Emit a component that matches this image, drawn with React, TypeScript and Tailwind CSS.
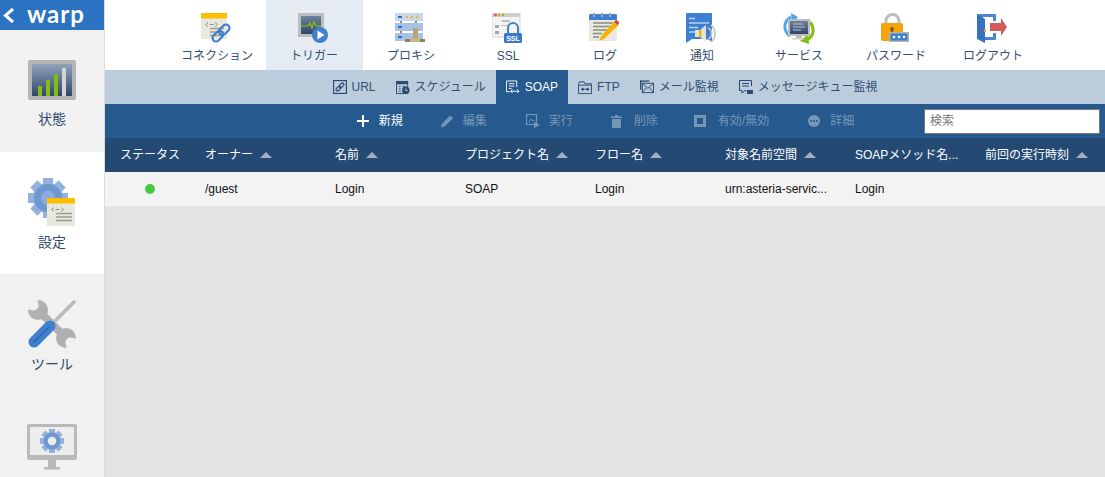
import React from "react";

const font = "font-['Liberation_Sans','Noto_Sans_CJK_JP',sans-serif]";

// big pictograms, drawn in a 48x48 box
const Gear = ({ cx, cy, r, outer, inner, hole }: { cx: number; cy: number; r: number; outer: string; inner: string; hole: string }) => (
  <g>
    {[0, 45, 90, 135].map((a) => (
      <rect key={a} x={cx - r * 0.25} y={cy - r} width={r * 0.5} height={r * 2} fill={outer} transform={`rotate(${a} ${cx} ${cy})`} />
    ))}
    <circle cx={cx} cy={cy} r={r * 0.76} fill={outer} />
    <circle cx={cx} cy={cy} r={r * 0.7} fill={inner} />
    <circle cx={cx} cy={cy} r={r * 0.36} fill={hole} />
  </g>
);

const DocCode = ({ x, y, w, h }: { x: number; y: number; w: number; h: number }) => (
  <g>
    <rect x={x} y={y} width={w} height={h} fill="#e8e8df" />
    <rect x={x} y={y} width={w} height={5.5} fill="#fdbd00" />
    <path d={`M${x + 7} ${y + 9.5}l-2.5 2 2.5 2M${x + 14} ${y + 9.5}l2.5 2-2.5 2M${x + 8.5} ${y + 11.5}h4`} stroke="#8f8f88" strokeWidth="1" fill="none" />
    <path d={`M${x + 9} ${y + 15.5}h${w - 12}M${x + 9} ${y + 19}h${w - 12}M${x + 9} ${y + 22.5}h${w - 12}`} stroke="#9c9c94" strokeWidth="1.5" />
  </g>
);

const StatusIcon = () => (
  <svg width="48" height="40" viewBox="0 0 48 40">
    <defs>
      <linearGradient id="st" x1="0" y1="0" x2="0" y2="1">
        <stop offset="0" stopColor="#8fa3bd" />
        <stop offset="1" stopColor="#2f4669" />
      </linearGradient>
    </defs>
    <rect width="48" height="40" rx="2" fill="#b4b4b4" />
    <rect x="4" y="4" width="40" height="32" fill="url(#st)" />
    <rect x="10" y="26" width="4" height="10" fill="#84bd10" />
    <rect x="18" y="20" width="4" height="16" fill="#84bd10" />
    <rect x="26" y="14" width="4" height="22" fill="#84bd10" />
    <rect x="34" y="8" width="4" height="28" fill="#d4d4d4" />
  </svg>
);

const SettingsIcon = () => (
  <svg width="48" height="48" viewBox="0 0 48 48">
    <Gear cx={20} cy={20} r={20} outer="#93b1de" inner="#6f97cf" hole="#8caadb" />
    <DocCode x={19} y={20} w={28} h={28} />
  </svg>
);

const ToolIcon = () => (
  <svg width="48" height="48" viewBox="0 0 48 48">
    <path d="M10 10L38 38" stroke="#b0b0b0" strokeWidth="8" />
    <circle cx="10" cy="10" r="10" fill="#b0b0b0" />
    <circle cx="38" cy="38" r="10" fill="#b0b0b0" />
    <path d="M-1 -1L9 -1L10.500 5a5 5 0 0 1-5.500 5.500L-1 9z" fill="#f1f1f1" />
    <path d="M49 49L39 49L37.500 43a5 5 0 0 1 5.500-5.500L49 39z" fill="#f1f1f1" />
    <path d="M46 2L27 21" stroke="#b9b9b9" strokeWidth="3.500" strokeLinecap="round" />
    <path d="M6 42L22 26" stroke="#3f7fcf" strokeWidth="11" strokeLinecap="round" />
    <path d="M5 43L21 27" stroke="#2b62ad" strokeWidth="1.500" />
  </svg>
);

const MonitorIcon = () => (
  <svg width="50" height="46" viewBox="0 0 50 46">
    <rect width="50" height="36" rx="2" fill="#b9b9b9" />
    <rect x="3" y="3" width="44" height="28" rx="1" fill="#ededed" />
    <rect x="21" y="36" width="8" height="7" fill="#b9b9b9" />
    <rect x="17" y="43" width="16" height="2.500" fill="#b9b9b9" />
    <Gear cx={25} cy={17} r={12} outer="#93b1de" inner="#6f97cf" hole="#ededed" />
  </svg>
);

const ConnectionIcon = () => (
  <svg width="32" height="32" viewBox="0 0 32 32">
    <DocCode x={0} y={0} w={26} h={26} />
    <g fill="none" transform="rotate(-45 20 20)">
      <rect x="9.500" y="16.500" width="12" height="7" rx="3.500" stroke="#3f7fcf" strokeWidth="2.200" />
      <rect x="18.500" y="16.500" width="12" height="7" rx="3.500" stroke="#3f7fcf" strokeWidth="2.200" />
    </g>
  </svg>
);

const TriggerIcon = () => (
  <svg width="32" height="32" viewBox="0 0 32 32">
    <defs>
      <linearGradient id="tr" x1="0" y1="0" x2="0" y2="1">
        <stop offset="0" stopColor="#6f829b" />
        <stop offset="1" stopColor="#2f4669" />
      </linearGradient>
    </defs>
    <rect width="26" height="24" fill="#bdbdbd" />
    <rect x="3" y="3" width="20" height="18" fill="url(#tr)" />
    <path d="M3 13h7l2-3 2 5 2-6 2 4h5" stroke="#8cc20f" strokeWidth="1.200" fill="none" />
    <circle cx="22" cy="22" r="8" fill="#3f7fcf" />
    <path d="M19.500 17.500v9l7-4.500z" fill="#fff" />
  </svg>
);

const ProxyIcon = () => (
  <svg width="32" height="32" viewBox="0 0 32 32">
    {[0, 10, 20].map((y) => (
      <g key={y}>
        <rect x="0" y={y} width="28" height="8" fill={y === 0 ? "#c8d6ea" : "#a9c1e4"} />
        <rect x="3" y={y + 3} width="4" height="2" fill="#2f6fbe" />
      </g>
    ))}
    <rect x="11" y="3" width="2" height="2" fill="#f2b233" />
    <rect x="16" y="3" width="2" height="2" fill="#f2b233" />
    <rect x="21" y="3" width="2" height="2" fill="#f2b233" />
    <rect x="5" y="8" width="2" height="2" fill="#8a8a8a" />
    <rect x="5" y="18" width="2" height="2" fill="#8a8a8a" />
    <rect x="20" y="8" width="2" height="2" fill="#8a8a8a" />
    <rect x="18" y="15" width="5" height="13" fill="#b5a57a" />
    <rect x="10" y="26" width="20" height="3" fill="#8f8159" />
    <rect x="15" y="25" width="10" height="4" fill="#c4b78f" />
  </svg>
);

const SslIcon = () => (
  <svg width="32" height="32" viewBox="0 0 32 32">
    <rect width="28" height="24" fill="#f4f4f4" stroke="#d4d4d4" />
    <rect width="28" height="4" fill="#cfcfcf" />
    <circle cx="3.500" cy="2" r="1.300" fill="#d94a3f" />
    <circle cx="7" cy="2" r="1.300" fill="#eea52b" />
    <circle cx="11" cy="2" r="1.300" fill="#8cc20f" />
    <rect x="10" y="7" width="8" height="2" fill="#bdbdbd" />
    <rect x="3" y="12" width="4" height="3" fill="#a8a8a8" />
    <rect x="3" y="18" width="4" height="3" fill="#a8a8a8" />
    <rect x="9" y="12" width="7" height="1" fill="#c4c4c4" />
    <path d="M16 20v-5a5 5 0 0 1 10 0v5" stroke="#3f7fcf" strokeWidth="2" fill="none" />
    <rect x="12" y="20" width="18" height="10" rx="1.500" fill="#3a78c8" />
    <text x="21" y="28" textAnchor="middle" fontSize="7" fontWeight="700" fill="#fff" fontFamily="Liberation Sans">SSL</text>
  </svg>
);

const LogIcon = () => (
  <svg width="32" height="32" viewBox="0 0 32 32">
    <rect y="1" width="28" height="27" rx="1.500" fill="#e8e8df" />
    <rect y="1" width="28" height="6" rx="1.500" fill="#3f7fcf" />
    <path d="M5 0v4M13 0v4M21 0v4" stroke="#9fa8b0" strokeWidth="2" />
    <path d="M4 10h20M4 13.500h20M4 17h14M4 20.500h9M4 24h6" stroke="#8b8b84" strokeWidth="1.500" />
    <path d="M10 28l2-5L25 9l4 3.500L15 26z" fill="#f8b500" />
    <path d="M25 9l2-2c1.500 0 3 1.500 3 3l-1 2.500z" fill="#d9443f" />
  </svg>
);

const NoticeIcon = () => (
  <svg width="32" height="32" viewBox="0 0 32 32">
    <path d="M1 0h24a1 1 0 0 1 1 1v28l-3-2-4-1H6l-6 4V1a1 1 0 0 1 1-1z" fill="#3f7fcf" />
    <path d="M3 5.500h6M3 10h20M3 14.500h9M3 19h7" stroke="#b9d1ef" strokeWidth="1.300" />
    <path d="M9 17h5l6-5v17l-6-5H9z" fill="#e3e3da" />
    <rect x="13" y="17" width="2.500" height="7" fill="#f8b500" />
    <path d="M22 15a6 6 0 0 1 0 11M25 12a11 11 0 0 1 0 17" stroke="#c6c6c6" strokeWidth="1.700" fill="none" />
  </svg>
);

const ServiceIcon = () => (
  <svg width="32" height="32" viewBox="0 0 32 32">
    <defs>
      <linearGradient id="sv" x1="0" y1="0" x2="0" y2="1">
        <stop offset="0" stopColor="#6f829b" />
        <stop offset="1" stopColor="#2f4669" />
      </linearGradient>
    </defs>
    <path d="M7 23C0 18 0 8 8 4" stroke="#4fa6ea" strokeWidth="3" fill="none" />
    <path d="M8 0l7 4-6 6z" fill="#4fa6ea" />
    <path d="M27 9c5 6 4 14-3 18" stroke="#84bd10" strokeWidth="3" fill="none" />
    <path d="M25 21l1 10-9-3z" fill="#84bd10" />
    <rect x="5" y="6" width="22" height="17" fill="#bdbdbd" />
    <rect x="7" y="8" width="18" height="13" fill="url(#sv)" />
    <path d="M10 11h10M10 14h12M10 17h8" stroke="#b9c6d8" strokeWidth="1" />
    <rect x="13" y="23" width="6" height="2" fill="#bdbdbd" />
    <rect x="9" y="25" width="12" height="1.500" fill="#cfcfcf" />
  </svg>
);

const PasswordIcon = () => (
  <svg width="32" height="32" viewBox="0 0 32 32">
    <path d="M6 11V8a6.500 6.500 0 0 1 13 0v3" stroke="#bdbdbd" strokeWidth="3" fill="none" />
    <rect x="1" y="10" width="22" height="18" rx="2" fill="#f5a30a" />
    <circle cx="12" cy="16" r="2" fill="#8a5a0a" />
    <rect x="11" y="17" width="2" height="4" fill="#8a5a0a" />
    <rect x="9" y="19" width="20" height="10" fill="#b4b4b4" />
    <rect x="10.500" y="20.500" width="17" height="7" fill="#3f7fcf" />
    <circle cx="14" cy="24" r="1.300" fill="#fff" />
    <circle cx="19" cy="24" r="1.300" fill="#fff" />
    <circle cx="24" cy="24" r="1.300" fill="#fff" />
  </svg>
);

const LogoutIcon = () => (
  <svg width="32" height="32" viewBox="0 0 32 32">
    <path d="M0 1h18a1 1 0 0 1 1 1v6h-3V4H6v20h10v-4h3v6a1 1 0 0 1-1 1h-10z" fill="#4a87d4" />
    <path d="M0 1l8 5v24l-8-4z" fill="#3672c0" />
    <rect x="7" y="16" width="2" height="3" fill="#f2a51d" />
    <path d="M13 10h11V5l6 9-6 9v-5H13z" fill="#cf5b5b" />
  </svg>
);

// small outline icons for the sub tabs
const UrlTab = ({ c }: { c: string }) => (
  <svg width="14" height="14" viewBox="0 0 14 14" fill="none" stroke={c}>
    <rect x="0.500" y="0.500" width="13" height="13" strokeWidth="1.300" />
    <g transform="rotate(-45 7 7)" strokeWidth="1.200">
      <rect x="2" y="5.500" width="5.500" height="3" rx="1.500" />
      <rect x="6.500" y="5.500" width="5.500" height="3" rx="1.500" />
    </g>
  </svg>
);

const ScheduleTab = ({ c }: { c: string }) => (
  <svg width="14" height="15" viewBox="0 0 15 15" fill="none">
    <rect x="0.500" y="1" width="12" height="13" stroke={c} />
    <rect x="0.500" y="1" width="12" height="3" fill={c} />
    <path d="M3 6.500h2M3 9h2M3 11.500h2M7 6.500h3" stroke={c} />
    <circle cx="10.500" cy="10.500" r="4" fill={c} />
    <path d="M10.500 8.500v2.300h2" stroke="#bbcddd" />
  </svg>
);

const SoapTab = ({ c }: { c: string }) => (
  <svg width="14" height="15" viewBox="0 0 15 15" fill="none" stroke={c}>
    <path d="M4 12H0.500V0.500h11V7" />
    <path d="M3 3.500h6M3 6h6M3 8.500h3" />
    <path d="M5 11.500h9M7 9.500l-2 2 2 2M12 9.500l2 2-2 2" />
  </svg>
);

const FtpTab = ({ c }: { c: string }) => (
  <svg width="14" height="15" viewBox="0 0 15 15" fill="none">
    <path d="M0.500 3.500V14h14V3.500h-7l-1-2H1.500z" stroke={c} />
    <path d="M0.500 5h14" stroke={c} />
    <path d="M3 9.500l2.500-2v1.200H7v1.600H5.500v1.200zM12.500 9.500l-2.500-2v1.200H8v1.600h2v1.200z" fill={c} />
  </svg>
);

const MailTab = ({ c }: { c: string }) => (
  <svg width="14" height="14" viewBox="0 0 15 14" fill="none" stroke={c}>
    <path d="M0.700 0v10" strokeWidth="1.400" />
    <path d="M0 0.700h10" strokeWidth="1.400" />
    <rect x="2.500" y="3" width="12" height="10" />
    <path d="M2.500 3l6 5.500 6-5.500M2.500 13l4.500-5.500M14.500 13L10 7.500" />
  </svg>
);

const QueueTab = ({ c }: { c: string }) => (
  <svg width="14" height="15" viewBox="0 0 14 15" fill="none">
    <path d="M12.500 6V0.500H0.500V10.500h2.500v2.500l3-2.500h1.500" stroke={c} />
    <path d="M3 3.500h7M3 6h7" stroke={c} />
    <rect x="8" y="10" width="6" height="4" fill={c} />
  </svg>
);

const dim = "#7696b6";

const PlusIcon = () => (
  <svg width="12" height="12" viewBox="0 0 12 12">
    <path d="M6 0v12M0 6h12" stroke="#fff" strokeWidth="2" />
  </svg>
);
const PencilIcon = () => (
  <svg width="12" height="13" viewBox="0 0 13 13">
    <path d="M0 13l1-4L10 0l3 3-9 9z" fill={dim} />
  </svg>
);
const RunIcon = () => (
  <svg width="14" height="14" viewBox="0 0 14 14" fill="none">
    <rect x="0.500" y="0.500" width="10" height="10" stroke={dim} strokeWidth="1.200" />
    <path d="M3 8l2-3 2 2 1-1" stroke={dim} />
    <path d="M8 8l6 3-6 3z" fill={dim} />
  </svg>
);
const TrashIcon = () => (
  <svg width="11" height="13" viewBox="0 0 11 13">
    <path d="M4 0h3v1.500h4V3H0V1.500h4zM1 4h9v8a1 1 0 0 1-1 1H2a1 1 0 0 1-1-1z" fill={dim} />
  </svg>
);
const ToggleIcon = () => (
  <svg width="12" height="12" viewBox="0 0 12 12">
    <path fillRule="evenodd" d="M0 0h12v12H0zM3 3v6h6V3z" fill={dim} />
  </svg>
);
const MoreIcon = () => (
  <svg width="12" height="12" viewBox="0 0 12 12">
    <circle cx="6" cy="6" r="6" fill={dim} />
    <circle cx="3" cy="6" r="1" fill="#265a8f" />
    <circle cx="6" cy="6" r="1" fill="#265a8f" />
    <circle cx="9" cy="6" r="1" fill="#265a8f" />
  </svg>
);

const SortArrow = () => (
  <svg width="12" height="6" viewBox="0 0 12 6" className="ml-[7px] shrink-0">
    <path d="M6 0l6 6H0z" fill="#9fb0c4" />
  </svg>
);

const sideItems = [
  { label: "状態", icon: <StatusIcon />, active: false, top: "pt-[30px]", gap: "mt-[9px]" },
  { label: "設定", icon: <SettingsIcon />, active: true, top: "pt-[26px]", gap: "mt-[6px]" },
  { label: "ツール", icon: <ToolIcon />, active: false, top: "pt-[26px]", gap: "mt-[6px]" },
];

const topItems = [
  { label: "コネクション", icon: <ConnectionIcon /> },
  { label: "トリガー", icon: <TriggerIcon />, active: true },
  { label: "プロキシ", icon: <ProxyIcon /> },
  { label: "SSL", icon: <SslIcon /> },
  { label: "ログ", icon: <LogIcon /> },
  { label: "通知", icon: <NoticeIcon /> },
  { label: "サービス", icon: <ServiceIcon /> },
  { label: "パスワード", icon: <PasswordIcon /> },
  { label: "ログアウト", icon: <LogoutIcon /> },
];

const subTabs = [
  { label: "URL", Icon: UrlTab },
  { label: "スケジュール", Icon: ScheduleTab },
  { label: "SOAP", Icon: SoapTab, active: true },
  { label: "FTP", Icon: FtpTab },
  { label: "メール監視", Icon: MailTab },
  { label: "メッセージキュー監視", Icon: QueueTab },
];

const actions = [
  { label: "新規", icon: <PlusIcon />, on: true, gap: "gap-[10px] mr-[38px]" },
  { label: "編集", icon: <PencilIcon />, gap: "gap-[10px] mr-[39px]" },
  { label: "実行", icon: <RunIcon />, gap: "gap-[9px] mr-[38px]" },
  { label: "削除", icon: <TrashIcon />, gap: "gap-[12px] mr-[36px]" },
  { label: "有効/無効", icon: <ToggleIcon />, gap: "gap-[12px] mr-[39px]" },
  { label: "詳細", icon: <MoreIcon />, gap: "gap-[10px]" },
];

const columns = [
  { label: "オーナー", cell: "/guest" },
  { label: "名前", cell: "Login" },
  { label: "プロジェクト名", cell: "SOAP" },
  { label: "フロー名", cell: "Login" },
  { label: "対象名前空間", cell: "urn:asteria-servic..." },
  { label: "SOAPメソッド名...", cell: "Login", noSort: true },
  { label: "前回の実行時刻", cell: "" },
];

const Sidebar = () => (
  <div className="w-[105px] shrink-0 h-[477px] overflow-hidden border-r border-[#dcdcdc] bg-[#f1f1f1]">
    <div className="h-[30px] bg-[#2b72c0] flex items-center pl-[2px]">
      <svg width="13" height="17" viewBox="0 0 13 17">
        <path d="M11 2L3.500 8.500 11 15" stroke="#fff" strokeWidth="3" fill="none" />
      </svg>
      <span className="ml-[12px] text-white text-[24px] leading-none font-bold tracking-[1px] font-['Lato',sans-serif] pb-[2px]">
        warp
      </span>
    </div>
    {sideItems.map((item) => (
      <div
        key={item.label}
        className={`h-[122px] flex flex-col items-center ${item.top} ${item.active ? "bg-white" : ""}`}
      >
        {item.icon}
        <div className={`${item.gap} text-[14px] leading-[20px] text-[#2f4a6e]`}>{item.label}</div>
      </div>
    ))}
    <div className="flex justify-center pt-[28px]">
      <MonitorIcon />
    </div>
  </div>
);

const App = () => (
  <div className={`${font} flex h-[477px] w-[1105px] overflow-hidden bg-[#e3e3e3]`}>
    <Sidebar />
    <div className="flex-1 min-w-0 flex flex-col">
      {/* top menu */}
      <div className="h-[70px] bg-white flex justify-center">
        {topItems.map((item) => (
          <div
            key={item.label}
            className={`w-[97px] flex flex-col items-center pt-[13px] ${item.active ? "bg-[#e4ebf3]" : ""}`}
          >
            <div className="h-[32px] w-[32px]">{item.icon}</div>
            <div className="mt-[1px] text-[12px] leading-[20px] text-[#35506f] whitespace-nowrap">{item.label}</div>
          </div>
        ))}
      </div>

      {/* sub tabs */}
      <div className="h-[34px] bg-[#bbcddd] flex justify-center">
        {subTabs.map(({ label, Icon, active }) => (
          <div
            key={label}
            className={`h-[34px] px-[10px] flex items-center gap-[5px] text-[12px] whitespace-nowrap ${
              active ? "bg-[#265a8f] text-white" : "text-[#33506f]"
            }`}
          >
            <Icon c={active ? "#ffffff" : "#2b4a70"} />
            <span>{label}</span>
          </div>
        ))}
      </div>

      {/* toolbar */}
      <div className="h-[34px] bg-[#265a8f] flex items-center">
        <div className="flex-1 basis-0" />
        <div className="flex items-center pl-[6px]">
          {actions.map((a) => (
            <div key={a.label} className={`flex items-center text-[12px] whitespace-nowrap ${a.gap}`}>
              {a.icon}
              <span className={a.on ? "text-white" : "text-[#7696b6]"}>{a.label}</span>
            </div>
          ))}
        </div>
        <div className="flex-1 basis-0 flex justify-end pr-[5px]">
          <input
            placeholder="検索"
            className="w-[176px] h-[25px] bg-white border border-[#777777] px-[5px] text-[12px] placeholder:text-[#777777] outline-none"
          />
        </div>
      </div>

      {/* table header */}
      <div className="h-[34px] bg-[#244a74] flex items-center text-[12px] text-white">
        <div className="w-[90px] text-center shrink-0">ステータス</div>
        {columns.map((c) => (
          <div key={c.label} className="w-[130px] shrink-0 px-[10px] flex items-center">
            <span className="whitespace-nowrap">{c.label}</span>
            {!c.noSort && <SortArrow />}
          </div>
        ))}
      </div>

      {/* table row */}
      <div className="h-[34px] bg-[#f3f3f3] flex items-center text-[12px] text-[#111111]">
        <div className="w-[90px] shrink-0 flex justify-center">
          <span className="w-[10px] h-[10px] rounded-full bg-[#46c846]" />
        </div>
        {columns.map((c) => (
          <div key={c.label} className="w-[130px] shrink-0 px-[10px] whitespace-nowrap">
            {c.cell}
          </div>
        ))}
      </div>
    </div>
  </div>
);

export default App;
